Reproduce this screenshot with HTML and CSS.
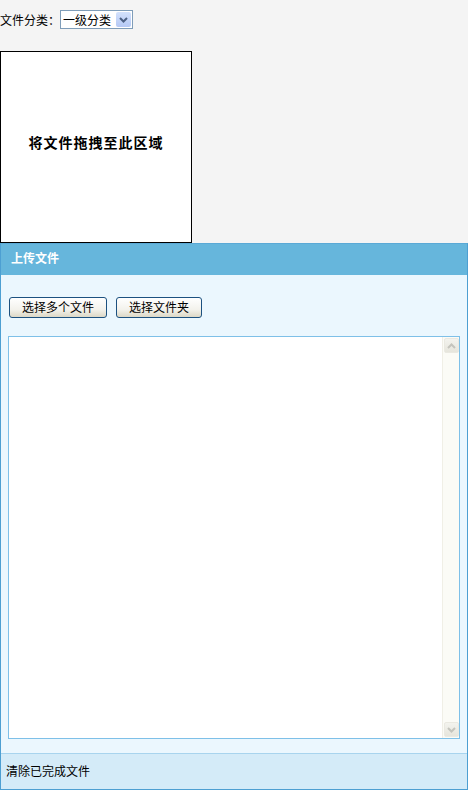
FILE: index.html
```html
<!DOCTYPE html>
<html lang="zh-CN">
<head>
    <meta charset="utf-8" />
    <title>上传文件</title>
    <link rel="stylesheet" href="styles.css">
</head>
<body>
    <div class="filtro">
        <span>文件分类：</span>
        <div class="scelta">
            <select>
                <option>一级分类</option>
            </select>
            <span class="freccia">
                <svg width="9" height="6" viewBox="0 0 9 6"><path d="M1 1 L4.5 4.5 L8 1" fill="none" stroke="#4d6185" stroke-width="2"/></svg>
            </span>
        </div>
    </div>

    <div class="zona">将文件拖拽至此区域</div>

    <div class="pannello">
        <div class="testa">上传文件</div>
        <div class="corpo">
            <div class="bottoni">
                <button class="btn largo">选择多个文件</button>
                <button class="btn stretto">选择文件夹</button>
            </div>
            <div class="lista">
                <div class="righe"></div>
                <div class="barra">
                    <span class="freccina">
                        <svg width="9" height="6" viewBox="0 0 9 6"><path d="M1 5 L4.5 1.5 L8 5" fill="none" stroke="#c4c4bd" stroke-width="2"/></svg>
                    </span>
                    <span class="vuoto"></span>
                    <span class="freccina">
                        <svg width="9" height="6" viewBox="0 0 9 6"><path d="M1 1 L4.5 4.5 L8 1" fill="none" stroke="#c4c4bd" stroke-width="2"/></svg>
                    </span>
                </div>
            </div>
        </div>
        <div class="piede">清除已完成文件</div>
    </div>
</body>
</html>
```

FILE: styles.css
```css
body {
    margin: 0;
    width: 468px;
    background-color: #f4f4f4;
    font-family: "Noto Sans CJK SC", "Noto Sans", sans-serif;
    font-size: 12px;
    color: #000;
}

/* riga con il menu a tendina */
.filtro {
    display: flex;
    align-items: center;
    height: 19px;
    padding-top: 10px;
    line-height: 1;
}

.scelta {
    display: flex;
    align-items: center;
    width: 71px;
    height: 17px;
    border: 1px solid #7f9db9;
    background-color: #fff;
}

.scelta select {
    appearance: none;
    -webkit-appearance: none;
    border: none;
    background: transparent;
    font: inherit;
    font-size: 12px;
    padding: 0 0 0 2px;
    margin: 0;
    width: 54px;
    height: 17px;
    outline: none;
}

.freccia {
    display: flex;
    align-items: center;
    justify-content: center;
    width: 15px;
    height: 15px;
    margin-left: 1px;
    background: linear-gradient(#d3e1fc, #b5c9f5);
    border-radius: 2px;
}

/* area di trascinamento */
.zona {
    box-sizing: border-box;
    width: 192px;
    height: 192px;
    margin-top: 22px;
    border: 1px solid #000;
    background-color: #fff;
    display: flex;
    align-items: center;
    justify-content: center;
    padding-bottom: 10px;
    font-size: 14px;
    font-weight: bold;
    letter-spacing: 1px;
}

.pannello {
    box-sizing: border-box;
    width: 468px;
    border: 1px solid #4d9fd2;
    border-top-color: #5aa9d6;
}

.testa {
    height: 31px;
    line-height: 28px;
    padding-left: 10px;
    background-color: #66b6dc;
    color: #fff;
    font-weight: bold;
}

.corpo {
    background-color: #ebf7fe;
    padding: 22px 6px 14px 7px;
}

.bottoni {
    display: flex;
    gap: 9px;
    padding-left: 1px;
    margin-bottom: 18px;
}

.btn {
    box-sizing: border-box;
    height: 21px;
    padding: 0 0 2px;
    font: inherit;
    font-size: 12px;
    line-height: 1;
    border: 1px solid #1c5180;
    border-radius: 3px;
    background: linear-gradient(#ffffff, #f3f2ec 60%, #dcd8c6);
    color: #000;
}

.largo { width: 98px; }
.stretto { width: 86px; }

/* elenco dei file con barra di scorrimento */
.lista {
    box-sizing: border-box;
    display: flex;
    width: 452px;
    height: 403px;
    border: 1px solid #7ec0e8;
    background-color: #fff;
}

.righe {
    flex: 1;
}

.barra {
    width: 16px;
    display: flex;
    flex-direction: column;
    align-items: center;
    padding-top: 1px;
    padding-bottom: 1px;
    background-color: #fbfbf6;
    border-left: 1px solid #f0efe6;
}

.freccina {
    display: flex;
    align-items: center;
    justify-content: center;
    width: 15px;
    height: 15px;
    background: linear-gradient(#f3f3ee, #e6e5dc);
    border: 1px solid #eae9e1;
    border-radius: 2px;
    box-sizing: border-box;
}

.vuoto {
    flex: 1;
}

.piede {
    height: 35px;
    line-height: 33px;
    padding-left: 5px;
    background-color: #d4ebf8;
    border-top: 1px solid #a8d4ee;
}
```
